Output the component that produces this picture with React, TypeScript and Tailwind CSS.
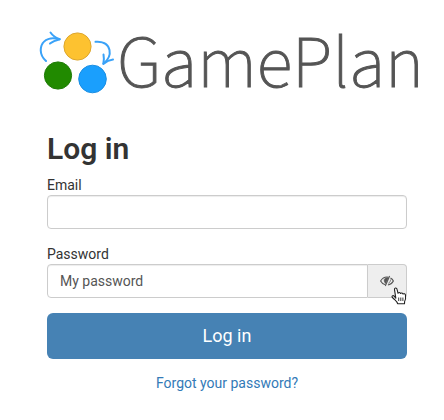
import { useState } from "react";

function LogoMark() {
  return (
    <svg viewBox="0 0 78 64" className="h-16 w-[78px] shrink-0" fill="none" aria-hidden="true">
      <circle cx="38.5" cy="16.5" r="13.6" fill="#fdc230" stroke="#dda62c" strokeWidth="1" />
      <circle cx="19" cy="45.5" r="13.6" fill="#218a00" stroke="#1c7a04" strokeWidth="1" />
      <circle cx="53.5" cy="49" r="13.8" fill="#1a9ffd" stroke="#1a8ee2" strokeWidth="1" />
      <g stroke="#3aa2f8" strokeWidth="2" strokeLinecap="round" strokeLinejoin="round">
        <path d="M7 31C2.500 27 .8 21 2.500 15.500C5 9 12 7 20.500 9.200" />
        <path d="M11.500 2.500C13.500 5.500 17 8 20.800 9.200C17.500 10 13.500 11.500 11 13.600" />
        <path d="M56.500 11.800C63 11.200 69 13.500 70.500 20C71.500 25 69 30 64.500 33.500" />
        <path d="M64.500 24.500C65.200 28 65 31 64.300 34C67 31.800 70 30 74 29.500" />
      </g>
    </svg>
  );
}

function HiddenEyeIcon() {
  return (
    <svg viewBox="0 0 14 12" className="h-3 w-3.5" fill="none" stroke="#555" aria-hidden="true">
      <path d="M5.400 9.700C3.300 9.200 1.500 7.800 .6 6C2 3.600 4.300 2 7 2C7.500 2 8 2.100 8.400 2.200" strokeWidth="1.100" />
      <path d="M10.500 2.900C11.900 3.600 12.800 4.700 13.400 6C12.300 8 10.300 9.600 7.900 10" strokeWidth="1.100" />
      <path d="M8.300 2.800C5.500 2.300 3.800 4 4.200 6C4.400 7.200 5 8 5.700 8.400Z" fill="#555" strokeWidth=".6" />
      <path d="M9.600 1L5.300 11" strokeWidth="1.100" />
      <path d="M10.500 4.600C10.600 6 9.800 7.500 8.400 8.300" strokeWidth=".8" />
    </svg>
  );
}

function HandPointer() {
  return (
    <svg viewBox="0 0 16 18" className="pointer-events-none absolute top-[22px] left-[23px] z-10 h-[18px] w-4" aria-hidden="true">
      <path
        d="M4.800 11.200L3.500 2.700C3.200 .7 5.600 .3 6 2.200L7 6.300C7.700 5.100 9.200 5.300 9.500 6.500C10.300 5.600 11.600 5.900 12 7C13 6.300 14.300 6.900 14.500 8.200C14.800 10.500 15 12.500 13.600 14.500L13.500 16.700H6.600C6.300 15 4.800 13.700 3.500 12.500L1.400 10.500C.3 9.200 1.900 8 3.200 9.200Z"
        fill="#fff"
        stroke="#222"
        strokeWidth="1.100"
        strokeLinejoin="round"
      />
      <path d="M7.700 10.500V14M9.800 10.500V14M11.900 10.500V14" stroke="#222" strokeWidth=".9" />
    </svg>
  );
}

export default function App() {
  const [visible, setVisible] = useState(true);
  return (
    <main className="min-h-screen bg-white pt-[30px] pb-6 font-[Roboto,sans-serif] text-sm leading-5 text-[#333]">
      <header className="flex items-start pl-[39px]">
        <LogoMark />
        <span className="font-['Noto_Sans_CJK_SC',sans-serif] text-[67px] leading-[56px] font-thin text-[#555] [-webkit-text-stroke:1px_#555]">
          GamePlan
        </span>
      </header>
      <form className="mt-[37px] pr-[37px] pl-[47px]" onSubmit={(e) => e.preventDefault()}>
        <h1 className="text-[30px] leading-9 font-semibold">Log in</h1>
        <label htmlFor="email" className="mt-2 block">Email</label>
        <input
          id="email"
          type="email"
          className="block h-[34px] w-full rounded border border-[#ccc] px-3 text-[#555] shadow-[inset_0_1px_1px_rgba(0,0,0,0.075)] outline-none"
        />
        <label htmlFor="password" className="mt-[15px] block">Password</label>
        <div className="flex">
          <input
            id="password"
            type={visible ? "text" : "password"}
            defaultValue="My password"
            className="h-[34px] min-w-0 flex-1 rounded-l border border-[#ccc] px-3 text-[#555] shadow-[inset_0_1px_1px_rgba(0,0,0,0.075)] outline-none"
          />
          <button
            type="button"
            aria-label="Toggle password visibility"
            onClick={() => setVisible(!visible)}
            className="relative flex h-[34px] w-[39px] cursor-pointer items-center justify-center rounded-r border border-l-0 border-[#ccc] bg-[#eee]"
          >
            <HiddenEyeIcon />
            <HandPointer />
          </button>
        </div>
        <button type="submit" className="mt-[15px] h-[46px] w-full rounded-md bg-[#4682b4] text-lg text-white">
          Log in
        </button>
        <div className="mt-[14px] text-center">
          <a href="#forgot" className="text-[#337ab7]">Forgot your password?</a>
        </div>
      </form>
    </main>
  );
}
